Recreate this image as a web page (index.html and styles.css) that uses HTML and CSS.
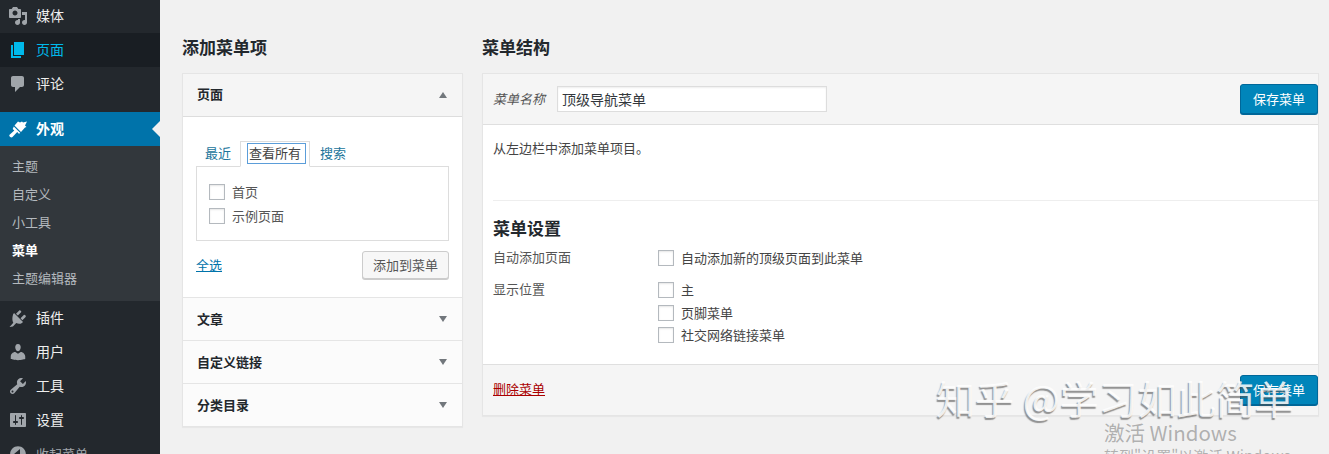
FILE: index.html
```html
<!DOCTYPE html>
<html lang="zh-CN">
<head>
<meta charset="utf-8">
<title>菜单</title>
<link rel="stylesheet" href="styles.css">
</head>
<body>
<div class="shell">
  <nav class="side">
    <a class="item"><svg class="ico" viewBox="0 0 20 20"><path fill-rule="evenodd" d="M13 11V4c0-.55-.45-1-1-1h-1.670L9 1H5L3.670 3H2c-.55 0-1 .45-1 1v7c0 .55.45 1 1 1h10c.55 0 1-.45 1-1zM7 4.500c1.380 0 2.500 1.120 2.500 2.500S8.380 9.500 7 9.500 4.500 8.380 4.500 7 5.620 4.500 7 4.500zM14 6h5v10.500c0 1.380-1.120 2.500-2.500 2.500S14 17.880 14 16.500s1.120-2.500 2.500-2.500c.17 0 .34.020.5.050V9h-3V6zm-4 8.050V13h2v3.500c0 1.380-1.120 2.500-2.500 2.500S7 17.880 7 16.500 8.120 14 9.500 14c.17 0 .34.020.5.050z"/></svg><span>媒体</span></a>
    <a class="item cur-sub"><svg class="ico" viewBox="0 0 20 20"><path d="M6 15V2h10v13H6zm-1 1h8v2H3V5h2v11z"/></svg><span>页面</span></a>
    <a class="item"><svg class="ico" viewBox="0 0 20 20"><path d="M5 2h9c1.100 0 2 .9 2 2v7c0 1.100-.9 2-2 2h-2l-5 5v-5H5c-1.100 0-2-.9-2-2V4c0-1.100.9-2 2-2z"/></svg><span>评论</span></a>
    <a class="item active"><svg class="ico" viewBox="0 0 20 20"><path d="M6.500 6.500L10 2.500l2 1 2-1 1 1 4-1-2 4 1.500 1.500-1.500.5-4 4.500z"/><path d="M5.800 7.500l6.500 6.500-1.400.8-1.700-1.700-4.700 5c-1 1-3.500-.2-3.200-2l5-4.600-1.600-1.600z"/></svg><span>外观</span><i class="notch"></i></a>
    <div class="sub">
      <a>主题</a>
      <a>自定义</a>
      <a>小工具</a>
      <a class="on">菜单</a>
      <a>主题编辑器</a>
    </div>
    <a class="item"><svg class="ico" viewBox="0 0 20 20"><path d="M13.110 4.360L9.870 7.600 8 5.730l3.240-3.240c.35-.34 1.050-.2 1.560.32.52.51.66 1.210.31 1.550z"/><path d="M5.110 6.130l.91-1.120 9.010 9.010-1.120.91c-1.500 1.200-3.900 1.100-5.650.1L4.900 18.400l-3.400.6 3.800-4.200c-1-1.800-1.400-4.900-.19-8.670z"/><path d="M14.400 12.130l3.240-3.240c.35-.34.2-1.040-.32-1.560-.51-.51-1.210-.65-1.550-.31l-3.240 3.240z"/></svg><span>插件</span></a>
    <a class="item"><svg class="ico" viewBox="0 0 20 20"><path d="M10 9.250c-2.270 0-2.730-3.440-2.730-3.440C7 4.020 7.820 2 9.970 2c2.160 0 2.980 2.020 2.710 3.810 0 0-.41 3.440-2.680 3.440zm0 2.570L12.720 10c2.390 0 4.520 2.330 4.520 4.530v2.490s-3.650 1.130-7.240 1.130c-3.650 0-7.240-1.130-7.240-1.130v-2.490c0-2.250 1.940-4.480 4.470-4.480z"/></svg><span>用户</span></a>
    <a class="item"><svg class="ico" viewBox="0 0 20 20"><path fill-rule="evenodd" d="M16.680 9.770c-1.340 1.340-3.300 1.670-4.950.99l-5.410 6.520c-.99.99-2.590.99-3.580 0s-.99-2.590 0-3.580l6.520-5.420c-.68-1.650-.35-3.610.99-4.950 1.280-1.280 3.120-1.620 4.720-1.060l-2.890 2.890 2.820 2.820 2.860-2.870c.53 1.590.19 3.420-1.080 4.680zM3.810 16.210c.4.390 1.030.39 1.420 0 .4-.4.4-1.030 0-1.430-.39-.39-1.020-.39-1.420 0a1.010 1.010 0 0 0 0 1.430z"/></svg><span>工具</span></a>
    <a class="item"><svg class="ico" viewBox="0 0 20 20"><path fill-rule="evenodd" d="M18 16V4c0-.55-.45-1-1-1H3c-.55 0-1 .45-1 1v12c0 .55.45 1 1 1h14c.55 0 1-.45 1-1zM8 11h1c.55 0 1 .45 1 1s-.45 1-1 1H8v1.500c0 .28-.22.5-.5.5s-.5-.22-.5-.5V13H6c-.55 0-1-.45-1-1s.45-1 1-1h1V5.500c0-.28.22-.5.5-.5s.5.22.5.5V11zm5-2h-1c-.55 0-1-.45-1-1s.45-1 1-1h1V5.500c0-.28.22-.5.5-.5s.5.22.5.5V7h1c.55 0 1 .45 1 1s-.45 1-1 1h-1v5.500c0 .28-.22.5-.5.5s-.5-.22-.5-.5V9z"/></svg><span>设置</span></a>
    <a class="item dim"><svg class="ico" viewBox="0 0 20 20"><path fill-rule="evenodd" d="M10 2.160c4.330 0 7.840 3.510 7.840 7.840s-3.510 7.840-7.840 7.840S2.160 14.330 2.160 10 5.670 2.160 10 2.160zM12 15V5l-6 5z"/></svg><span>收起菜单</span></a>
  </nav>
  <main class="main">
    <section class="left">
      <h2>添加菜单项</h2>
      <div class="acc">
        <div class="acc-head first"><span>页面</span><i class="arrow up"></i></div>
        <div class="acc-body">
          <div class="tabs">
            <a class="tab">最近</a>
            <a class="tab sel"><span class="focus">查看所有</span></a>
            <a class="tab">搜索</a>
          </div>
          <div class="panel">
            <label class="row"><i class="cb"></i>首页</label>
            <label class="row"><i class="cb"></i>示例页面</label>
          </div>
          <div class="acts">
            <a class="all">全选</a>
            <button class="btn">添加到菜单</button>
          </div>
        </div>
        <div class="acc-head"><span>文章</span><i class="arrow"></i></div>
        <div class="acc-head"><span>自定义链接</span><i class="arrow"></i></div>
        <div class="acc-head"><span>分类目录</span><i class="arrow"></i></div>
      </div>
    </section>
    <section class="right">
      <h2>菜单结构</h2>
      <div class="box">
        <div class="box-top">
          <em>菜单名称</em>
          <div class="name">顶级导航菜单</div>
          <button class="save">保存菜单</button>
        </div>
        <div class="box-mid">
          <p class="hint">从左边栏中添加菜单项目。</p>
          <div class="settings">
            <h3>菜单设置</h3>
            <div class="set-row auto">
              <div class="set-label">自动添加页面</div>
              <div class="set-opts"><label class="opt"><i class="cb"></i>自动添加新的顶级页面到此菜单</label></div>
            </div>
            <div class="set-row">
              <div class="set-label">显示位置</div>
              <div class="set-opts">
                <label class="opt"><i class="cb"></i>主</label>
                <label class="opt"><i class="cb"></i>页脚菜单</label>
                <label class="opt"><i class="cb"></i>社交网络链接菜单</label>
              </div>
            </div>
          </div>
        </div>
        <div class="box-foot">
          <a class="del">删除菜单</a>
          <button class="save">保存菜单</button>
        </div>
      </div>
    </section>
  </main>
</div>
<div class="mark">知乎 @学习如此简单</div>
<div class="win"><div class="win1">激活 Windows</div><div class="win2">转到"设置"以激活 Windows。</div></div>
</body>
</html>
```
FILE: styles.css
```css
* { box-sizing: border-box; }
html, body { margin: 0; height: 454px; overflow: hidden; }
body { background: #f1f1f1; font: 13px/1.4 "Noto Sans CJK SC", "Liberation Sans", sans-serif; color: #444; position: relative; }
.shell { display: flex; height: 454px; overflow: hidden; }
.side { width: 160px; flex: none; background: #23282d; margin-top: -1px; height: 470px; color: #eee; }
.item { display: flex; align-items: center; height: 34px; padding-left: 8px; font-size: 14px; color: #eee; position: relative; }
.ico { width: 20px; height: 20px; fill: #a0a5aa; margin-right: 8px; flex: none; }
.cur-sub { background: #191e23; color: #00b9eb; }
.cur-sub .ico { fill: #00b9eb; }
.active { background: #0073aa; color: #fff; font-weight: 600; margin-top: 11px; }
.active .ico { fill: #fff; }
.notch { position: absolute; right: 0; top: 9px; border: 8px solid transparent; border-right-color: #f1f1f1; border-left: 0; }
.sub { background: #32373c; padding: 6px 0 9px; }
.sub a { display: flex; align-items: center; height: 28px; padding-left: 12px; color: #b4b9be; font-size: 13px; }
.sub a.on { color: #fff; font-weight: 600; }
.dim { color: #a0a5aa; font-size: 13px; }
.main { flex: 1; display: flex; padding: 0 10px 0 22px; gap: 19px; min-width: 0; }
.left { width: 281px; flex: none; }
.right { flex: 1; min-width: 0; }
h2 { margin: 0; height: 73px; padding-top: 34px; font-size: 17px; line-height: 26px; font-weight: 600; color: #23282d; }
.acc { background: #fff; border: 1px solid #e5e5e5; box-shadow: 0 1px 1px rgba(0,0,0,.04); }
.acc-head { height: 43px; display: flex; align-items: center; justify-content: space-between; padding: 0 15px 0 14px; font-weight: 600; color: #23282d; font-size: 13px; border-top: 1px solid #e5e5e5; background: #fbfbfb; }
.acc-head.first { background: #f5f5f5; border-top: 0; border-bottom: 1px solid #ddd; }
.acc-head.first span { padding-bottom: 2px; }
.arrow { width: 0; height: 0; border: 4px solid transparent; border-top: 6px solid #72777c; border-bottom: 0; }
.arrow.up { border-top: 0; border-bottom: 6px solid #72777c; }
.acc-body { height: 180px; padding: 24px 13px 0; }
.tabs { display: flex; height: 26px; position: relative; padding-left: 4px; }
.tab { padding: 3px 5px 0; color: #21759b; }
.tab:first-child { padding-left: 5px; padding-right: 9px; }
.sel { border: 1px solid #ddd; border-bottom: 1px solid #fff; background: #fff; color: #444; height: 26px; margin-bottom: -1px; z-index: 1; padding: 2px 0 0 7px; width: 70px; }
.sel .focus { display: block; width: 57px; height: 19px; box-shadow: 0 0 0 1px #5b9dd9; line-height: 18px; padding-left: 1px; white-space: nowrap; }
.sel + .tab { padding-left: 10px; }
.panel { height: 75px; border: 1px solid #ddd; padding: 13px 12px 0; margin-top: -1px; }
.row { display: flex; align-items: center; height: 24px; color: #555; }
.cb { width: 16px; height: 16px; border: 1px solid #b4b9be; background: #fff; margin-right: 7px; flex: none; box-shadow: inset 0 1px 2px rgba(0,0,0,.1); }
.acts { display: flex; align-items: center; justify-content: space-between; margin-top: 10px; height: 28px; }
.all { color: #0073aa; text-decoration: underline; }
.btn { height: 28px; width: 87px; padding: 0; font: inherit; color: #555; background: #f7f7f7; border: 1px solid #ccc; border-radius: 3px; box-shadow: 0 1px 0 #ccc; }
.box { border: 1px solid #e5e5e5; background: #fff; box-shadow: 0 1px 1px rgba(0,0,0,.04); }
.box-top { height: 51px; background: #f5f5f5; border-bottom: 1px solid #dfdfdf; display: flex; align-items: center; padding: 0 0 0 10px; }
.box-top em { color: #555; width: 64px; }
.name { width: 270px; height: 26px; background: #fff; border: 1px solid #ddd; padding: 0 4px; font-size: 14px; line-height: 24px; color: #32373c; box-shadow: inset 0 1px 2px rgba(0,0,0,.07); }
.save { margin-left: auto; width: 78px; height: 30px; background: #0085ba; border: 1px solid #006799; border-radius: 3px; color: #fff; font: inherit; padding: 0; box-shadow: 0 1px 0 #006799; }
.box-mid { height: 239px; padding: 0 0 0 10px; }
.hint { margin: 0; padding-top: 14px; height: 75px; color: #444; }
.settings { border-top: 1px solid #eee; }
h3 { margin: 0; padding-top: 14px; font-size: 17px; line-height: 25px; font-weight: 600; color: #23282d; height: 46px; }
.set-row { display: flex; }
.auto { height: 32px; }
.set-label { width: 165px; color: #555; line-height: 20px; }
.set-opts { display: flex; flex-direction: column; }
.opt { display: flex; align-items: center; height: 22.500px; color: #444; }
.box-foot { height: 51px; background: #f5f5f5; border-top: 1px solid #dfdfdf; display: flex; align-items: center; padding: 0 0 0 10px; }
.del { color: #a00; text-decoration: underline; padding-bottom: 2px; }
.mark { position: absolute; left: 936px; top: 372px; font-size: 39px; line-height: 50px; color: rgba(255,255,255,.85); text-shadow: -1px 2px 1px rgba(80,80,80,.6); white-space: nowrap; }
.win { position: absolute; left: 1104px; top: 420px; color: rgba(120,120,120,.55); white-space: nowrap; }
.win1 { font-size: 20.500px; line-height: 24px; }
.win2 { font-size: 15px; line-height: 22px; margin-top: 1px; }
```
